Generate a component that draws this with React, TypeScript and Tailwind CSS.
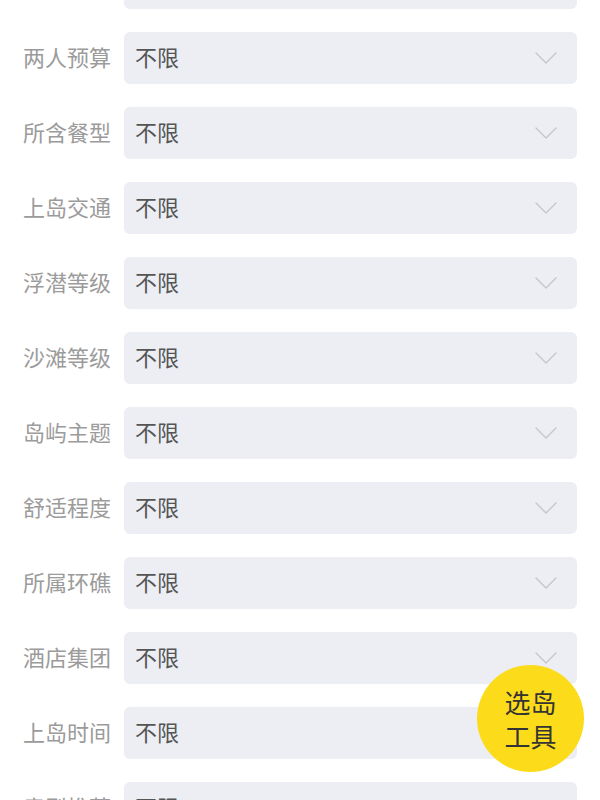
import React from "react";

const labels = [
  "住宿类型",
  "两人预算",
  "所含餐型",
  "上岛交通",
  "浮潜等级",
  "沙滩等级",
  "岛屿主题",
  "舒适程度",
  "所属环礁",
  "酒店集团",
  "上岛时间",
  "房型推荐",
];

function Chevron() {
  return (
    <svg width="22" height="12" viewBox="0 0 22 12" fill="none">
      <path d="M1 1 L11 11 L21 1" stroke="#c4c6cc" strokeWidth="1.4" strokeLinecap="round" strokeLinejoin="round" />
    </svg>
  );
}

export default function App() {
  return (
    <div
      className="relative w-[600px] h-[800px] overflow-hidden bg-white"
      style={{ fontFamily: '"Noto Sans CJK SC", "Noto Sans", sans-serif' }}
    >
      <div className="flex flex-col gap-[23px] mt-[-43px] pl-[23px] pr-[23px]">
        {labels.map((l) => (
          <div key={l} className="flex items-center gap-[12px]">
            <div className="w-[89px] shrink-0 pb-[4px] text-[22px] leading-none text-[#9b9b9b] whitespace-nowrap">{l}</div>
            <div className="flex-1 h-[52px] rounded-[6px] bg-[#eceef3] flex items-center justify-between pl-[11px] pr-[20px]">
              <span className="pb-[4px] text-[22px] leading-none text-[#555555]">不限</span>
              <Chevron />
            </div>
          </div>
        ))}
      </div>
      <div className="absolute left-[477px] top-[665px] w-[107px] h-[107px] rounded-full bg-[#fcdc1a] flex flex-col items-center justify-center text-[26px] leading-[34px] text-[#333333]">
        <span>选岛</span>
        <span>工具</span>
      </div>
    </div>
  );
}
